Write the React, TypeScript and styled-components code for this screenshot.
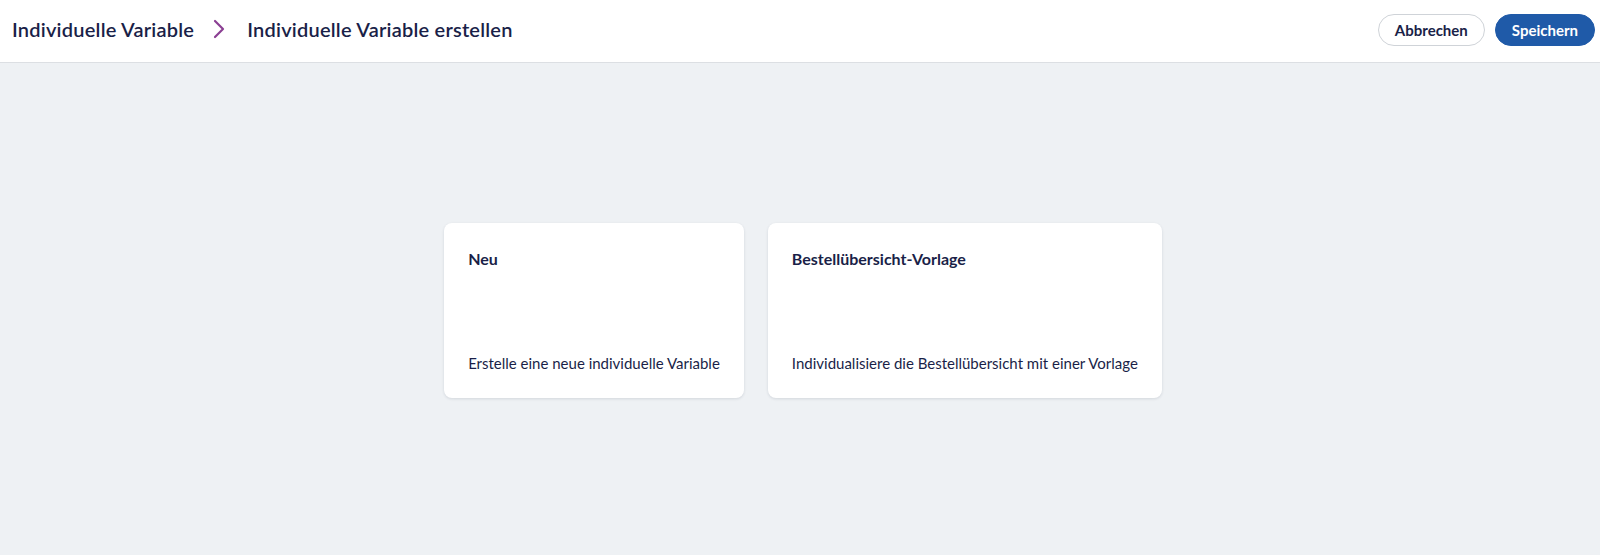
import React from 'react'
import styled, { createGlobalStyle } from 'styled-components'

const GlobalStyle = createGlobalStyle`
  html, body {
    margin: 0;
    padding: 0;
    height: 100%;
  }
  body {
    font-family: Lato, "Open Sans", Arial, sans-serif;
    color: #1a1f48;
    background: #eef1f4;
  }
  #root {
    height: 100%;
  }
`

type Option = {
  title: string
  description: string
}

const options: Option[] = [
  { title: 'Neu', description: 'Erstelle eine neue individuelle Variable' },
  {
    title: 'Bestellübersicht-Vorlage',
    description: 'Individualisiere die Bestellübersicht mit einer Vorlage',
  },
]

const ChevronIcon = () => (
  <svg width="14" height="20" viewBox="0 0 14 20" fill="none">
    <path d="M3 2l8 8-8 8" stroke="#8b3f93" strokeWidth="2.2" strokeLinecap="round" strokeLinejoin="round" />
  </svg>
)

export default function App() {
  return (
    <>
      <GlobalStyle />
      <Page>
        <Header>
          <Breadcrumbs>
            <Crumb>Individuelle Variable</Crumb>
            <Separator>
              <ChevronIcon />
            </Separator>
            <Crumb>Individuelle Variable erstellen</Crumb>
          </Breadcrumbs>
          <Actions>
            <Button>Abbrechen</Button>
            <Button primary>Speichern</Button>
          </Actions>
        </Header>
        <Main>
          <CardRow>
            {options.map((o) => (
              <Card key={o.title}>
                <CardTitle>{o.title}</CardTitle>
                <CardText>{o.description}</CardText>
              </Card>
            ))}
          </CardRow>
        </Main>
      </Page>
    </>
  )
}

const Page = styled.div`
  display: flex;
  flex-direction: column;
  height: 100vh;
`

const Header = styled.header`
  display: flex;
  align-items: center;
  justify-content: space-between;
  height: 63px;
  box-sizing: border-box;
  padding: 0 5px 4px 12px;
  background: #ffffff;
  border-bottom: 1px solid #dcdfe3;
  flex-shrink: 0;
`

const Breadcrumbs = styled.nav`
  display: flex;
  align-items: center;
`

const Crumb = styled.span`
  font-size: 20px;
  font-weight: 600;
  color: #1a1f48;
  letter-spacing: 0.22px;
`

const Separator = styled.span`
  display: flex;
  margin: 0 21px 0 18px;
`

const Actions = styled.div`
  display: flex;
  gap: 10px;
  padding-top: 1px;
`

const Button = styled.button<{ primary?: boolean }>`
  height: 32px;
  padding: 0 16px;
  border-radius: 16px;
  font-family: inherit;
  font-size: 15px;
  font-weight: 700;
  cursor: pointer;
  border: 1px solid ${({ primary }) => (primary ? '#1f5aa8' : '#cfd3d8')};
  background: ${({ primary }) => (primary ? '#1f5aa8' : '#ffffff')};
  color: ${({ primary }) => (primary ? '#ffffff' : '#1a1f48')};
`

const Main = styled.main`
  flex: 1;
  display: flex;
  align-items: center;
  justify-content: center;
  padding-left: 6px;
  padding-top: 2px;
`

const CardRow = styled.div`
  display: flex;
  gap: 24px;
`

const Card = styled.div`
  display: flex;
  flex-direction: column;
  justify-content: space-between;
  height: 175px;
  box-sizing: border-box;
  padding: 25px 24px 25px;
  background: #ffffff;
  border-radius: 8px;
  box-shadow: 0 1px 3px rgba(20, 30, 60, 0.12);
`

const CardTitle = styled.div`
  font-size: 16px;
  font-weight: 700;
  line-height: 22px;
`

const CardText = styled.div`
  font-size: 15px;
  line-height: 20px;
  white-space: nowrap;
`
